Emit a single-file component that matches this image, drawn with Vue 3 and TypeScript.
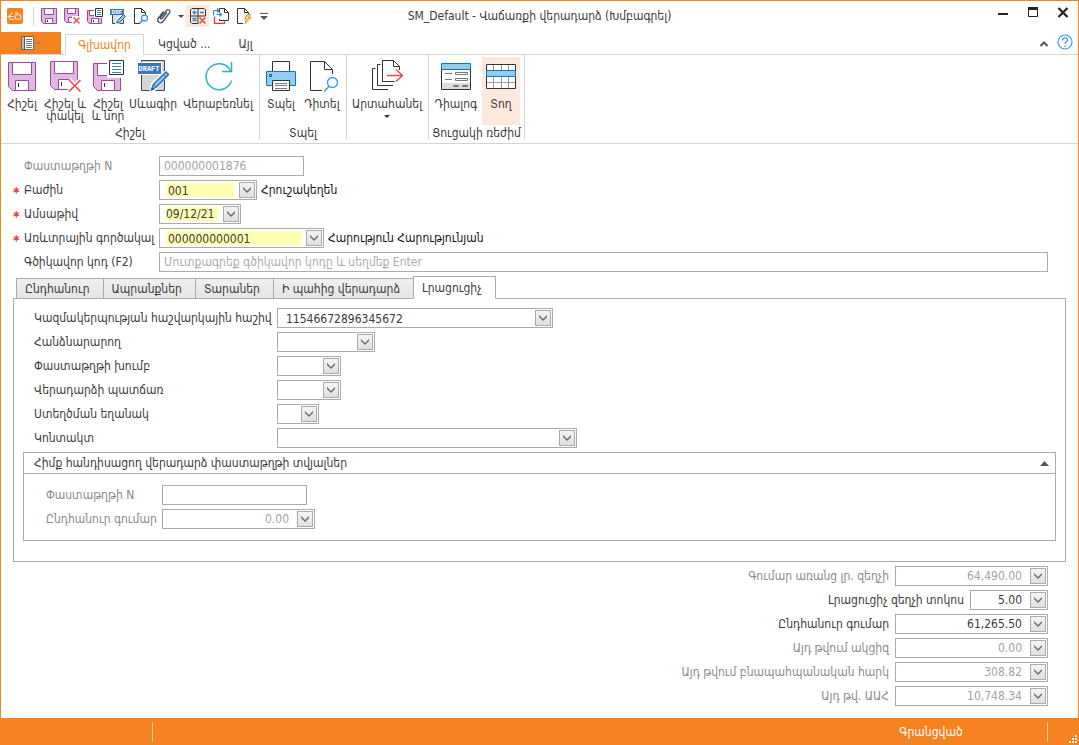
<script setup lang="ts">
import { ref } from 'vue'

interface RibbonItem { icon: string; label: string; active?: boolean; menu?: boolean; banner?: string }
interface RibbonGroup { key: string; label: string; items: RibbonItem[] }
interface Field { id: string; label: string; size: string; value: string }
interface Total { id: string; label: string; value: string; size: string; disabled: boolean }

const quick: { icon: string; title: string; banner?: string }[] = [
  { icon: 'q-save', title: 'Հիշել' },
  { icon: 'q-saveclose', title: 'Հիշել և փակել' },
  { icon: 'q-savenew', title: 'Հիշել և նոր' },
  { icon: 'q-draft', title: 'Սևագիր', banner: 'DRF' },
  { icon: 'q-view', title: 'Դիտել' },
  { icon: 'q-clip', title: 'Կցված' },
  { icon: 'q-more', title: 'Կցված ...' },
  { icon: 'q-calc', title: 'Հաշվարկ' },
  { icon: 'q-copy', title: 'Պատճենել' },
  { icon: 'q-flash', title: 'Գործողություն' },
  { icon: 'q-custom', title: 'Այլ' },
]

const groups: RibbonGroup[] = [
  {
    key: 'save', label: 'Հիշել', items: [
      { icon: 'r-save', label: 'Հիշել' },
      { icon: 'r-saveclose', label: 'Հիշել և\nփակել' },
      { icon: 'r-savenew', label: 'Հիշել\nև նոր' },
      { icon: 'r-draft', label: 'Սևագիր', banner: 'DRAFT' },
      { icon: 'r-reload', label: 'Վերաբեռնել' },
    ],
  },
  {
    key: 'print', label: 'Տպել', items: [
      { icon: 'r-print', label: 'Տպել' },
      { icon: 'r-view', label: 'Դիտել' },
    ],
  },
  { key: 'export', label: '', items: [{ icon: 'r-export', label: 'Արտահանել', menu: true }] },
  {
    key: 'mode', label: 'Ցուցակի ռեժիմ', items: [
      { icon: 'r-dialog', label: 'Դիալոգ' },
      { icon: 'r-row', label: 'Տող', active: true },
    ],
  },
]

const tabs = ['Ընդհանուր', 'Ապրանքներ', 'Տարաներ', 'Ի պահից վերադարձ', 'Լրացուցիչ']
const activeTab = ref(4)

const fields: Field[] = [
  { id: 'account', label: 'Կազմակերպության հաշվարկային հաշիվ', size: 'w-account', value: '11546672896345672' },
  { id: 'assigner', label: 'Հանձնարարող', size: 'w-m', value: '' },
  { id: 'docgroup', label: 'Փաստաթղթի խումբ', size: 'w-s', value: '' },
  { id: 'reason', label: 'Վերադարձի պատճառ', size: 'w-s', value: '' },
  { id: 'method', label: 'Ստեղծման եղանակ', size: 'w-xs', value: '' },
  { id: 'contact', label: 'Կոնտակտ', size: 'w-contact', value: '' },
]

const totals = ref<Total[]>([
  { id: 't1', label: 'Գումար առանց լր. զեղչի', value: '64,490.00', size: 'w-sum', disabled: true },
  { id: 't2', label: 'Լրացուցիչ զեղչի տոկոս', value: '5.00', size: 'w-percent', disabled: false },
  { id: 't3', label: 'Ընդհանուր գումար', value: '61,265.50', size: 'w-sum', disabled: false },
  { id: 't4', label: 'Այդ թվում ակցիզ', value: '0.00', size: 'w-sum', disabled: true },
  { id: 't5', label: 'Այդ թվում բնապահպանական հարկ', value: '308.82', size: 'w-sum', disabled: true },
  { id: 't6', label: 'Այդ թվ. ԱԱՀ', value: '10,748.34', size: 'w-sum', disabled: true },
])

const docNumber = ref('000000001876')
const date = ref('09/12/21')
const barcode = ref('')
const baseNumber = ref('')
const baseSum = ref('0.00')
const baseOpen = ref(true)
</script>

<template>
  <svg class="defs" aria-hidden="true">
    <symbol id="chev" viewBox="0 0 14 14"><path d="M3 4v2l4 4 4-4V4L7 8z" fill="#6a6a6a" /></symbol>

    <symbol id="logo" viewBox="0 0 16 16">
      <rect width="16" height="16" rx="2" fill="#f58220" />
      <path d="M5.5 4.500 1.500 8.500h5M1.500 8.500 3.500 11.500H7" fill="none" stroke="#ffe3c8" stroke-width="1.1" />
      <path d="M8 5.500 10 4.500l2 2.500M11 6.500c4 0 4 5 0 5s-4-5 0-5z" fill="none" stroke="#ffe3c8" stroke-width="1.1" />
    </symbol>

    <symbol id="q-save" viewBox="0 0 16 16">
      <path d="M.5.5h15v15h-13l-2-2z" fill="#dfb9e0" stroke="#9c4a9e" />
      <path d="M3.5.5h9v6h-9zM4.500 10.500h7v5h-7z" fill="#fff" stroke="#9c4a9e" /><path d="M6 12h1v2H6z" fill="#333" />
    </symbol>
    <symbol id="q-saveclose" viewBox="0 0 16 16">
      <path d="M.5.5h14v14h-12l-2-2z" fill="#dfb9e0" stroke="#9c4a9e" />
      <path d="M3.5.5h8v5h-8zM4.500 9.500h6v5h-6z" fill="#fff" stroke="#9c4a9e" />
      <path d="M8 8h8v8H8z" fill="#fff" /><path d="M9.500 9.500l6 6M15.500 9.500l-6 6" stroke="#e8474a" stroke-width="1.4" />
    </symbol>
    <symbol id="q-savenew" viewBox="0 0 16 16">
      <path d="M.5 2.500h14v13h-12l-2-2z" fill="#dfb9e0" stroke="#9c4a9e" />
      <path d="M2.500 2.500h8v5h-8zM4.500 10.500h7v5h-7z" fill="#fff" stroke="#9c4a9e" /><path d="M6 12h1v2H6z" fill="#333" />
      <path d="M7 0h9v10H7z" fill="#fff" /><path d="M8.500.5h7v8h-7z" fill="#fff" stroke="#333" /><path d="M10 2.500h4M10 4.500h4M10 6.500h4" stroke="#3083c8" />
    </symbol>
    <symbol id="q-draft" viewBox="0 0 16 16">
      <path d="M2.500 6v9.500h11V6" fill="#ddd" stroke="#444" />
      <path d="M0 1h14v6H0z" fill="#3a76ba" />
      <path d="M5 16l1-4 5-5h4l1 2-7 7z" fill="#fff" /><path d="M6.500 15l1-2.500 6-6 2 2-6 6z" fill="#8cc4ec" stroke="#1b5f9e" />
    </symbol>
    <symbol id="q-view" viewBox="0 0 16 16">
      <path d="M7 15.500H1.500V.5h7l4 4V7M8.500.5v4h4" fill="none" stroke="#333" />
      <circle cx="11.500" cy="10" r="3" fill="#fff" stroke="#3d9bd8" stroke-width="1.3" /><path d="M9.500 12l-3 3.500" stroke="#3d9bd8" stroke-width="1.5" />
    </symbol>
    <symbol id="q-clip" viewBox="0 0 16 16">
      <path d="M11 4.500 6 10.500c-1 1-2.300.2-1.500-1L10.500 2.500c1.800-2 4.500.2 3 2.300L7 13.500c-2.500 3-7 0-4.500-3.500L7.500 3.500" fill="none" stroke="#3f5364" stroke-width="1.3" />
    </symbol>
    <symbol id="q-more" viewBox="0 0 6 16"><path d="M0 7h6L3 10z" fill="#444" /></symbol>
    <symbol id="q-calc" viewBox="0 0 16 16">
      <path d="M8 15.500H2l-1.500-1.500V2L2 .5h12L15.500 2v6H.5M8 .5v15" fill="none" stroke="#333" />
      <path d="M2.500 4.500h4M4.500 2.500v4M10 4.500h4M2.500 10.500h4M2.500 12.500h4" stroke="#3083c8" stroke-width="1.3" />
      <path d="M9.500 9.500l6 6M15.500 9.500l-6 6" stroke="#e8474a" stroke-width="1.5" />
    </symbol>
    <symbol id="q-copy" viewBox="0 0 16 16">
      <path d="M6.500 4V.5h5l4 4v8h-9V11M11.500.5v4h4" fill="none" stroke="#333" />
      <path d="M.5 7.500V4c0-1 .5-1.500 1.500-1.500h4M4 .5l2 2-2 2" fill="none" stroke="#3083c8" stroke-width="1.2" />
      <path d="M3.500 6.500h5M6.500 4.500l2 2-2 2" fill="none" stroke="#3083c8" stroke-width="1.2" />
      <path d="M1.500 8.500v7h10v-2" fill="none" stroke="#dd3a3c" stroke-width="1.3" />
    </symbol>
    <symbol id="q-flash" viewBox="0 0 16 16">
      <path d="M7 15.500H1.500V.5h7l4 4V6M8.500.5v4h4" fill="none" stroke="#333" />
      <path d="M11.500 6.500h3l-2 3H15l-6 6 1.500-4.500H8.500z" fill="#fbd09a" stroke="#ea8a2e" />
    </symbol>
    <symbol id="q-custom" viewBox="0 0 8 16"><path d="M0 5h8v1H0zM0 8h8L4 12z" fill="#555" /></symbol>

    <symbol id="r-save" viewBox="0 0 32 32">
      <path d="M2.500 2.500h27v28h-23l-4-4z" fill="#dfb9e0" stroke="#9c4a9e" />
      <path d="M6.500 2.500h19v12h-19zM9.500 20.500h13v10h-13z" fill="#fff" stroke="#9c4a9e" /><path d="M12 23h1v4h-1z" fill="#333" />
    </symbol>
    <symbol id="r-saveclose" viewBox="0 0 32 32">
      <path d="M1.500 1.500h27v28h-23l-4-4z" fill="#dfb9e0" stroke="#9c4a9e" />
      <path d="M5.500 1.500h19v12h-19zM9.500 19.500h13v10h-13z" fill="#fff" stroke="#9c4a9e" /><path d="M12 22h1v4h-1z" fill="#333" />
      <path d="M20 20l12 12M32 20L20 32" stroke="#fff" stroke-width="5" /><path d="M20 20l11.500 11.500M31.500 20L20 31.500" stroke="#e8474a" stroke-width="1.5" />
    </symbol>
    <symbol id="r-savenew" viewBox="0 0 32 32">
      <path d="M1.500 3.500h27v27h-23l-4-4z" fill="#dfb9e0" stroke="#9c4a9e" />
      <path d="M5.500 3.500h19v12h-19zM9.500 20.500h13v10h-13z" fill="#fff" stroke="#9c4a9e" /><path d="M12 23h1v4h-1z" fill="#333" />
      <path d="M15 0h17v18H15z" fill="#fff" /><path d="M17.500.5h14v14h-14z" fill="#fff" stroke="#333" />
      <path d="M20 3.500h9M20 6.500h9M20 9.500h9M20 12.500h9" stroke="#3083c8" />
    </symbol>
    <symbol id="r-draft" viewBox="0 0 32 32">
      <path d="M4.500.5h23v30h-23z" fill="#d6d6d6" stroke="#444" />
      <path d="M0 2h25v13H0z" fill="#fff" /><path d="M1 3h23v11H1z" fill="#3a76ba" />
      <path d="M12 32l2-9 13-12h5v4L18 31z" fill="#fff" />
      <path d="M14.500 29.500l2-5.500L29 12l2.500 2.500-12 12.500z" fill="#8cc4ec" stroke="#1b6cb0" stroke-width="1.3" /><path d="M26.500 14.500l2.500 2.500M16.500 24l3 3" stroke="#1b6cb0" /><path d="M13.500 31l1.500-4 2.500 2.500z" fill="#1b5f9e" />
    </symbol>
    <symbol id="r-reload" viewBox="0 0 32 32">
      <path d="M29 11.500A13 13 0 1 0 29.500 20.500" fill="none" stroke="#2bb5cc" stroke-width="1.5" />
      <path d="M29.500 2v9.500H20" fill="none" stroke="#2bb5cc" stroke-width="1.5" />
    </symbol>
    <symbol id="r-print" viewBox="0 0 32 32">
      <path d="M7.500 1.500h17v11h-17z" fill="#fff" stroke="#333" />
      <path d="M1.500 11.500h29v14h-29z" fill="#92cdf0" stroke="#1673b5" />
      <path d="M4.500 14.500h2v2h-2z" fill="#92cdf0" stroke="#0a5c9c" />
      <path d="M7.500 20.500h17v10h-17z" fill="#fff" stroke="#333" /><path d="M10 23.500h12M10 25.500h12M10 28.500h12" stroke="#777" />
    </symbol>
    <symbol id="r-view" viewBox="0 0 32 32">
      <path d="M16 30.500H4.500v-29h14l8 8V14M18.500 1.500v8h8" fill="none" stroke="#333" />
      <circle cx="26.500" cy="22.500" r="5" fill="#fff" stroke="#3d9bd8" stroke-width="1.3" /><path d="M23 26.500l-5 5" stroke="#3d9bd8" stroke-width="1.5" />
    </symbol>
    <symbol id="r-export" viewBox="0 0 32 32">
      <path d="M28.500 10V6.500l-6-6h-11v21h12M22.500.5v6h6" fill="none" stroke="#333" />
      <path d="M9.500 4.500h-3v21h15.500M4.500 8.500h-3v21h15.500" fill="none" stroke="#333" />
      <path d="M16 15.500h15M25 9.500l6.500 6-6.500 6" fill="none" stroke="#e8474a" stroke-width="1.4" />
    </symbol>
    <symbol id="r-dialog" viewBox="0 0 32 32">
      <path d="M1.500 8.500h29v21h-29z" fill="#fff" stroke="#333" /><path d="M2 23h28v6H2z" fill="#ddd" />
      <path d="M1.500 3.500h29v6h-29z" fill="#92cdf0" stroke="#1673b5" />
      <path d="M5 13.500h7M5 19.500h7M15.500 12.500h12v2h-12zM15.500 18.500h12v2h-12zM13.500 25.500h5v1h-5zM22.500 25.500h5v1h-5z" fill="#fff" stroke="#777" />
    </symbol>
    <symbol id="r-row" viewBox="0 0 32 32">
      <path d="M1.500 4.500h29v24h-29z" fill="#fff" />
      <path d="M8.500 5v23M16.500 5v23M23.500 5v23M2 22.500h28" stroke="#999" />
      <path d="M1.500 4.500h29v24h-29z" fill="none" stroke="#333" />
      <path d="M1.500 10.500h29v6h-29z" fill="#92cdf0" stroke="#1673b5" />
    </symbol>
  </svg>

  <div class="window">
    <header class="titlebar">
      <div class="quick">
        <svg class="logo"><use href="#logo" /></svg>
        <span class="quick-sep"></span>
        <button v-for="q in quick" :key="q.icon" type="button" class="quick-btn" :class="q.icon" :aria-label="q.title">
          <svg>
            <use :href="'#' + q.icon" />
            <text v-if="q.banner" class="banner small" x="7" y="6">{{ q.banner }}</text>
          </svg>
        </button>
      </div>
      <h1 class="title">SM_Default - Վաճառքի վերադարձ (Խմբագրել)</h1>
      <div class="winctl">
        <button type="button" aria-label="Minimize"><svg viewBox="0 0 14 14"><path d="M2 7h10v2H2z" fill="#222" /></svg></button>
        <button type="button" aria-label="Maximize"><svg viewBox="0 0 14 14"><path d="M2.500 2.500v8h9v-8z" fill="none" stroke="#222" /><path d="M2 1h10v3H2z" fill="#222" /></svg></button>
        <button type="button" aria-label="Close"><svg viewBox="0 0 14 14"><path d="M2.500 2l9 9M11.500 2l-9 9" stroke="#222" stroke-width="2.2" /></svg></button>
      </div>
    </header>

    <nav class="ribbon-tabs">
      <button type="button" class="app-menu" aria-label="Menu">
        <svg viewBox="0 0 20 16">
          <path d="M.5 1.500h12v13H.5z" fill="#fff" stroke="#666" /><path d="M1 2h2v12H1z" fill="#bbb" /><path d="M3.500 2v12" stroke="#555" />
          <path d="M5 4.500h6M5 6.500h6M5 8.500h6M5 10.500h6M5 12.500h6" stroke="#777" /><path d="M14 7h6l-3 3z" fill="#9a8272" />
        </svg>
      </button>
      <button type="button" class="rtab on">Գլխավոր</button>
      <button type="button" class="rtab">Կցված ...</button>
      <button type="button" class="rtab">Այլ</button>
      <span class="grow"></span>
      <button type="button" class="mini" aria-label="Collapse"><svg viewBox="0 0 16 16"><path d="M4.500 12L8 8.500l3.500 3.500" fill="none" stroke="#555" stroke-width="2" /></svg></button>
      <button type="button" class="mini" aria-label="Help">
        <svg viewBox="0 0 16 16"><circle cx="8" cy="8" r="7" fill="#fff" stroke="#3d9bd8" stroke-width="1.2" /><path d="M5.500 6.500c0-3.500 5-3.500 5-.5 0 2-2.500 1.500-2.500 4M8 11.500V13" fill="none" stroke="#3d9bd8" stroke-width="1.3" /></svg>
      </button>
    </nav>

    <section class="ribbon">
      <div v-for="g in groups" :key="g.key" class="rgroup" :class="g.key">
        <div class="ritems">
          <button v-for="i in g.items" :key="i.icon" type="button" class="ritem" :class="{ on: i.active }">
            <svg class="ricon">
              <use :href="'#' + i.icon" />
              <text v-if="i.banner" class="banner" x="12" y="11">{{ i.banner }}</text>
            </svg>
            <span class="rlabel">{{ i.label }}</span>
            <svg v-if="i.menu" class="rmenu" viewBox="0 0 6 4"><path d="M0 0h6L3 3z" fill="#333" /></svg>
          </button>
        </div>
        <div class="rcaption">{{ g.label }}</div>
      </div>
    </section>

    <main class="content">
      <div class="head-form">
        <label class="lab dim" for="docn">Փաստաթղթի N</label>
        <div class="cell"><input id="docn" v-model="docNumber" class="text w-doc" disabled /></div>

        <label class="lab req" for="dept">Բաժին</label>
        <div class="cell">
          <span class="combo w-dept"><select id="dept" class="hot"><option>001</option></select><svg class="arrow"><use href="#chev" /></svg></span>
          <span class="note">Հրուշակեղեն</span>
        </div>

        <label class="lab req" for="date">Ամսաթիվ</label>
        <div class="cell"><span class="combo w-date"><input id="date" v-model="date" class="hot" /><button type="button" class="arrow" aria-label="Ամսաթիվ"><svg><use href="#chev" /></svg></button></span></div>

        <label class="lab req" for="agent">Առևտրային գործակալ</label>
        <div class="cell">
          <span class="combo w-agent"><select id="agent" class="hot"><option>000000000001</option></select><svg class="arrow"><use href="#chev" /></svg></span>
          <span class="note">Հարություն Հարությունյան</span>
        </div>

        <label class="lab" for="barcode">Գծիկավոր կոդ (F2)</label>
        <div class="cell"><input id="barcode" v-model="barcode" class="text wide" placeholder="Մուտքագրեք գծիկավոր կոդը և սեղմեք Enter" /></div>
      </div>

      <div class="tabs" role="tablist">
        <button v-for="(t, n) in tabs" :key="t" type="button" role="tab" class="tab" :class="{ on: n === activeTab }" :aria-selected="n === activeTab" @click="activeTab = n">{{ t }}</button>
      </div>
      <div class="panel" role="tabpanel">
        <div class="panel-form">
          <template v-for="f in fields" :key="f.id">
            <label class="lab" :for="f.id">{{ f.label }}</label>
            <div class="cell"><span class="combo" :class="f.size"><select :id="f.id"><option>{{ f.value }}</option></select><svg class="arrow"><use href="#chev" /></svg></span></div>
          </template>
        </div>

        <section class="box">
          <button type="button" class="box-head" :aria-expanded="baseOpen" @click="baseOpen = !baseOpen">
            <span>Հիմք հանդիսացող վերադարձ փաստաթղթի տվյալներ</span>
            <svg viewBox="0 0 9 5"><path d="M0 5h9L4.500 0z" fill="#555" /></svg>
          </button>
          <div v-show="baseOpen" class="box-form">
            <label class="lab dim" for="basen">Փաստաթղթի N</label>
            <div class="cell"><input id="basen" v-model="baseNumber" class="text w-doc" disabled /></div>
            <label class="lab dim" for="bases">Ընդհանուր գումար</label>
            <div class="cell"><span class="combo w-sum"><input id="bases" v-model="baseSum" class="num" disabled /><button type="button" class="arrow" aria-label="Ընդհանուր գումար"><svg><use href="#chev" /></svg></button></span></div>
          </div>
        </section>
      </div>

      <div class="totals">
        <div v-for="t in totals" :key="t.id" class="total">
          <label :for="t.id" :class="{ dim: t.disabled }">{{ t.label }}</label>
          <span class="combo" :class="t.size"><input :id="t.id" v-model="t.value" class="num" :disabled="t.disabled" /><button type="button" class="arrow" :aria-label="t.label"><svg><use href="#chev" /></svg></button></span>
        </div>
      </div>
    </main>

    <footer class="status">
      <span class="status-left"></span>
      <span class="status-mid"></span>
      <span class="status-text">Գրանցված</span>
      <svg class="grip" viewBox="0 0 9 9"><path d="M6 0h2v2H6zM3 3h2v2H3zM6 3h2v2H6zM0 6h2v2H0zM3 6h2v2H3zM6 6h2v2H6z" fill="#fff" /></svg>
    </footer>
  </div>
</template>

<style>
body { background: #fff; }
</style>

<style scoped>
.defs { position: absolute; width: 0; height: 0; }
.window {
  box-sizing: border-box; min-height: 100vh; display: flex; flex-direction: column;
  border: 1px solid #f58220; border-bottom: 0; background: #fff; color: #3b3b3b;
  font-family: "DejaVu Sans Condensed", "DejaVu Sans", sans-serif; font-size: 12px; line-height: 16px;
}
button, input, select { font: inherit; color: inherit; margin: 0; padding: 0; border: 0; background: none; box-sizing: border-box; border-radius: 0; }
.grow { flex: 1; }
.banner { font-family: "Liberation Mono", monospace; font-weight: 700; font-size: 7px; fill: #fff; text-anchor: middle; }
.banner.small { font-size: 6px; }

.titlebar { display: grid; grid-template-columns: 1fr auto 1fr; align-items: center; height: 30px; }
.quick { display: flex; align-items: center; }
.logo { width: 16px; height: 16px; margin-left: 6px; }
.quick-sep { width: 1px; height: 19px; margin: 0 3px 0 10px; background: #d4d4d4; }
.quick-btn { width: 23px; height: 22px; display: flex; align-items: center; justify-content: center; }
.quick-btn svg { width: 16px; height: 16px; }
.quick-btn.q-more { width: 11px; }
.quick-btn.q-more svg { width: 6px; }
.quick-btn.q-custom { width: 17px; }
.quick-btn.q-custom svg { width: 8px; }
.quick-btn.q-calc { background: #fce8dc; }
.title { margin: 0; font-size: 12px; font-weight: 400; }
.winctl { display: flex; justify-content: flex-end; align-self: start; }
.winctl button { width: 30px; height: 24px; display: grid; place-items: center; }
.winctl svg { width: 14px; height: 14px; }

.ribbon-tabs { display: flex; align-items: flex-end; height: 23px; border-bottom: 1px solid #d4d4d4; padding-right: 3px; }
.app-menu { width: 60px; height: 22px; margin-right: 4px; background: #f58220; display: grid; place-items: center; }
.app-menu svg { width: 20px; height: 16px; }
.rtab { height: 20px; padding: 0 14px; white-space: nowrap; }
.rtab.on { width: 79px; height: 21px; padding: 0; margin-bottom: -1px; border: 1px solid #d4d4d4; border-bottom: 0; background: #fff; color: #f58220; }
.mini { width: 21px; height: 22px; display: grid; place-items: center; align-self: flex-start; }
.mini svg { width: 16px; height: 16px; }

.ribbon { display: flex; height: 88px; border-bottom: 1px solid #d4d4d4; }
.rgroup { display: flex; flex-direction: column; padding-top: 2px; border-right: 1px solid #d4d4d4; margin-bottom: 4px; }
.ritems { display: grid; flex: 1; grid-auto-flow: column; }
.save .ritems { grid-template-columns: 42px 44px 42px 48px 82px; }
.print .ritems { grid-template-columns: 40px 42px; padding: 0 3px 0 1px; }
.export .ritems { grid-template-columns: 80px; padding-right: 1px; }
.mode .ritems { grid-template-columns: 52px 38px; padding: 0 4px 0 1px; }
.ritem { height: 68px; padding-top: 3px; display: flex; flex-direction: column; align-items: center; line-height: 12px; }
.ritem.on { background: #fce8dc; }
.ricon { width: 32px; height: 32px; margin-bottom: 6px; flex: none; }
.rlabel { text-align: center; white-space: pre; }
.rmenu { width: 6px; height: 4px; margin-top: 5px; }
.rcaption { height: 15px; text-align: center; }

.content { flex: 1; padding: 12px 12px 12px; }
.head-form, .panel-form, .box-form { display: grid; row-gap: 4px; align-items: center; }
.head-form { grid-template-columns: 146px 1fr; padding-right: 18px; }
.lab { position: relative; white-space: nowrap; }
.head-form .lab { padding-left: 11px; }
.dim { color: #8a8a8a; }
.req::before { content: "*"; position: absolute; left: 0; top: 2px; color: #f0292c; font-size: 14px; font-weight: 700; }
.cell { display: flex; align-items: center; height: 20px; }
.text { height: 20px; border: 1px solid #ababab; padding: 0 4px; background: #fff; }
.text:disabled { color: #a3a3a3; }
.text::placeholder { color: #ababab; opacity: 1; }
.wide { width: 100%; }
.note { margin-left: 4px; color: #111; white-space: nowrap; }

.combo { box-sizing: border-box; display: grid; grid-template-columns: minmax(0, 1fr); height: 20px; border: 1px solid #ababab; background: #fff; }
.combo > * { grid-area: 1 / 1; }
.combo select { appearance: none; width: 100%; height: 18px; padding: 2px 22px 2px 8px; }
.combo input { width: 100%; height: 18px; padding: 2px 25px 2px 6px; }
.combo .hot { background: #ffffb4; background-clip: content-box; }
.combo select.hot { padding-left: 6px; text-indent: 2px; }
.combo input.hot { padding-right: 22px; }
.combo .num { text-align: right; }
.combo input:disabled { color: #a3a3a3; }
.arrow { justify-self: end; align-self: center; box-sizing: border-box; width: 16px; height: 16px; margin-right: 1px; border: 1px solid #ababab; background: linear-gradient(#f4f4f4, #e0e0e0); pointer-events: none; }
button.arrow { pointer-events: auto; display: grid; }
button.arrow svg { width: 14px; height: 14px; }

.w-doc { width: 145px; }
.w-dept, .w-m { width: 98px; }
.w-date { width: 82px; }
.w-agent { width: 165px; }
.w-account { width: 276px; }
.w-s { width: 64px; }
.w-xs { width: 42px; }
.w-contact { width: 300px; }
.w-sum { width: 153px; }
.w-percent { width: 78px; }

.tabs { display: flex; align-items: flex-end; height: 23px; margin: 4px 0 -1px 3px; position: relative; }
.tab { height: 21px; padding: 0 13px 0 8px; margin-right: -1px; border: 1px solid #ababab; background: linear-gradient(#f0f0f0, #e4e4e4); white-space: nowrap; }
.tab.on { height: 23px; border-bottom-color: #fff; background: #fff; }
.panel { border: 1px solid #ababab; padding: 9px 9px 20px; }
.panel-form { grid-template-columns: 254px 1fr; }
.panel-form .lab { padding-left: 11px; }
.box { margin-top: 4px; border: 1px solid #ababab; }
.box-head { display: flex; width: 100%; height: 21px; align-items: center; justify-content: space-between; padding: 0 6px 0 10px; border-bottom: 1px solid #ababab; }
.box-head svg { width: 9px; height: 5px; }
.box-form { grid-template-columns: 138px 1fr; padding: 11px 0; }
.box-form .lab { padding-left: 22px; }

.totals { display: grid; gap: 4px; margin-top: 4px; padding-right: 18px; }
.total { display: flex; align-items: center; justify-content: flex-end; gap: 6px; }

.status { display: flex; align-items: center; height: 27px; background: #f58220; color: #fff; }
.status-left { width: 151px; height: 20px; border-right: 1px solid #fbc79b; }
.status-mid { flex: 1; }
.status-text { box-sizing: border-box; width: 233px; height: 20px; line-height: 20px; text-align: center; border-right: 1px solid #fbc79b; }
.grip { width: 9px; height: 9px; align-self: flex-end; margin: 0 0 1px 21px; }
</style>
